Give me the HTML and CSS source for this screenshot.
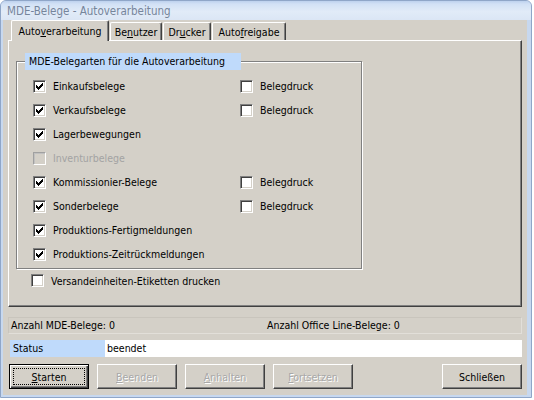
FILE: index.html
```html
<!DOCTYPE html>
<html lang="de">
<head>
<meta charset="utf-8">
<title>MDE-Belege - Autoverarbeitung</title>
<link rel="stylesheet" href="styles.css">
</head>
<body>
<div class="window">
  <div class="titlebar">MDE-Belege - Autoverarbeitung</div>
  <div class="client">
    <div class="tabs">
      <div class="tab active">Auto<u>v</u>erarbeitung</div>
      <div class="tab w-ben">Be<u>n</u>utzer</div>
      <div class="tab w-dru">Dr<u>u</u>cker</div>
      <div class="tab w-auf">Auto<u>f</u>reigabe</div>
    </div>
    <div class="panel">
      <div class="group">
        <div class="group-label">MDE-Belegarten für die Autoverarbeitung</div>
        <div class="grid">
          <div class="row"><span class="cb"><svg width="11" height="11" viewBox="0 0 11 11"><path d="M2 4h1v3H2z M3 5h1v3H3z M4 6h1v3H4z M5 5h1v3H5z M6 4h1v3H6z M7 3h1v3H7z M8 2h1v3H8z"/></svg></span>Einkaufsbelege</div>
          <div class="row"><span class="cb"></span>Belegdruck</div>
          <div class="row"><span class="cb"><svg width="11" height="11" viewBox="0 0 11 11"><path d="M2 4h1v3H2z M3 5h1v3H3z M4 6h1v3H4z M5 5h1v3H5z M6 4h1v3H6z M7 3h1v3H7z M8 2h1v3H8z"/></svg></span>Verkaufsbelege</div>
          <div class="row"><span class="cb"></span>Belegdruck</div>
          <div class="row"><span class="cb"><svg width="11" height="11" viewBox="0 0 11 11"><path d="M2 4h1v3H2z M3 5h1v3H3z M4 6h1v3H4z M5 5h1v3H5z M6 4h1v3H6z M7 3h1v3H7z M8 2h1v3H8z"/></svg></span>Lagerbewegungen</div>
          <div class="row"></div>
          <div class="row disabled"><span class="cb"></span>Inventurbelege</div>
          <div class="row"></div>
          <div class="row"><span class="cb"><svg width="11" height="11" viewBox="0 0 11 11"><path d="M2 4h1v3H2z M3 5h1v3H3z M4 6h1v3H4z M5 5h1v3H5z M6 4h1v3H6z M7 3h1v3H7z M8 2h1v3H8z"/></svg></span>Kommissionier-Belege</div>
          <div class="row"><span class="cb"></span>Belegdruck</div>
          <div class="row"><span class="cb"><svg width="11" height="11" viewBox="0 0 11 11"><path d="M2 4h1v3H2z M3 5h1v3H3z M4 6h1v3H4z M5 5h1v3H5z M6 4h1v3H6z M7 3h1v3H7z M8 2h1v3H8z"/></svg></span>Sonderbelege</div>
          <div class="row"><span class="cb"></span>Belegdruck</div>
          <div class="row"><span class="cb"><svg width="11" height="11" viewBox="0 0 11 11"><path d="M2 4h1v3H2z M3 5h1v3H3z M4 6h1v3H4z M5 5h1v3H5z M6 4h1v3H6z M7 3h1v3H7z M8 2h1v3H8z"/></svg></span>Produktions-Fertigmeldungen</div>
          <div class="row"></div>
          <div class="row"><span class="cb"><svg width="11" height="11" viewBox="0 0 11 11"><path d="M2 4h1v3H2z M3 5h1v3H3z M4 6h1v3H4z M5 5h1v3H5z M6 4h1v3H6z M7 3h1v3H7z M8 2h1v3H8z"/></svg></span>Produktions-Zeitrückmeldungen</div>
          <div class="row"></div>
        </div>
      </div>
      <div class="row single"><span class="cb"></span>Versandeinheiten-Etiketten drucken</div>
    </div>
    <div class="info">
      <span>Anzahl MDE-Belege: 0</span>
      <span>Anzahl Office Line-Belege: 0</span>
    </div>
    <div class="status">
      <div class="status-label">Status</div>
      <div class="status-value">beendet</div>
    </div>
    <div class="buttons">
      <div class="btn default"><span><u>S</u>tarten</span></div>
      <div class="btn disabled"><span><u>B</u>eenden</span></div>
      <div class="btn disabled"><span><u>A</u>nhalten</span></div>
      <div class="btn disabled"><span><u>F</u>ortsetzen</span></div>
      <div class="btn right"><span>Schließen</span></div>
    </div>
  </div>
</div>
</body>
</html>
```
FILE: styles.css
```css
* { box-sizing: border-box; }
html, body { margin: 0; padding: 0; background: #ffffff; }
body {
  font-family: "DejaVu Sans Condensed", "DejaVu Sans", sans-serif;
  font-size: 10.5px;
  color: #000;
}
u { text-decoration: underline; text-underline-offset: 1px; }

.window {
  width: 532px;
  height: 398px;
  border: 1px solid #8fa6c8;
  border-radius: 6px 6px 0 0;
  background: #c7d8ef;
  padding: 0 4px 2px 2px;
  display: flex;
  flex-direction: column;
}
.titlebar {
  height: 19px;
  margin: 0 -4px 0 -2px;
  padding-left: 6px;
  border-radius: 5px 5px 0 0;
  background: linear-gradient(#bdd1ee 0, #d2e1f5 3px, #e1ebf8 55%, #dbe6f5 100%);
  color: #76859b;
  font-size: 11.5px;
  line-height: 20px;
  white-space: nowrap;
}
.client {
  flex: 1;
  background: #d4d0c8;
  padding: 0 5px;
  display: flex;
  flex-direction: column;
}

/* tabs */
.tabs {
  height: 20px;
  display: flex;
  align-items: flex-end;
  gap: 1px;
  padding-left: 3px;
}
.tab {
  height: 18px;
  border-top: 1px solid #fff;
  border-left: 1px solid #fff;
  border-right: 1px solid #404040;
  border-radius: 2px 2px 0 0;
  box-shadow: inset -1px 0 0 #808080;
  padding-top: 3px;
  line-height: 13px;
  text-align: center;
  white-space: nowrap;
}
.tab.active {
  width: 98px;
  height: 21px;
  margin-bottom: -1px;
  padding-top: 4px;
  position: relative;
  z-index: 1;
  background: #d4d0c8;
}
.w-ben { width: 52px; }
.w-dru { width: 48px; }
.w-auf { width: 74px; }

.panel {
  height: 267px;
  border-top: 1px solid #fff;
  border-left: 1px solid #fff;
  border-right: 1px solid #404040;
  border-bottom: 1px solid #404040;
  box-shadow: inset -1px -1px 0 #808080;
  padding: 20px 0 0 7px;
}

/* group box */
.group {
  position: relative;
  width: 346px;
  border: 1px solid #808080;
  box-shadow: 1px 1px 0 #fff, inset 1px 1px 0 #fff;
  padding: 12px 0 2px 16px;
}
.group-label {
  position: absolute;
  left: 8px;
  top: -9px;
  width: 216px;
  height: 17px;
  padding-left: 4px;
  background: #bfdafb;
  line-height: 17px;
  white-space: nowrap;
}
.grid {
  display: grid;
  grid-template-columns: 207px auto;
  grid-auto-rows: 24px;
}
.row {
  display: flex;
  align-items: center;
  white-space: nowrap;
}
.cb {
  width: 13px;
  height: 13px;
  flex: none;
  margin-right: 7px;
  border: 1px solid;
  border-color: #808080 #fff #fff #808080;
  box-shadow: inset 1px 1px 0 #404040, inset -1px -1px 0 #d4d0c8;
  background: #fff;
  display: flex;
}
.cb svg { display: block; fill: #000; }
.row.disabled { color: #a3a3a3; }
.row.disabled .cb {
  background: #d4d0c8;
  border-color: #a0a0a0 #fff #fff #a0a0a0;
  box-shadow: inset 1px 1px 0 #c0c0c0, inset -1px -1px 0 #d4d0c8;
}
.row.single {
  height: 13px;
  margin: 5px 0 0 15px;
}

/* bottom area */
.info {
  margin-top: 10px;
  height: 17px;
  border: 1px solid;
  border-color: #c9c5bd #e2dfd9 #e2dfd9 #c9c5bd;
  padding-left: 2px;
  display: grid;
  grid-template-columns: 256px auto;
  line-height: 15px;
  white-space: nowrap;
}
.status {
  margin: 6px 0 0 2px;
  height: 17px;
  display: flex;
  line-height: 17px;
}
.status-label {
  width: 95px;
  background: #bfdafb;
  padding-left: 3px;
}
.status-value {
  flex: 1;
  background: #fff;
  padding-left: 2px;
}
.buttons {
  margin: 7px 0 0 1px;
  display: flex;
  gap: 8px;
}
.btn {
  width: 80px;
  height: 25px;
  border: 1px solid;
  border-color: #fff #404040 #404040 #fff;
  box-shadow: inset -1px -1px 0 #808080;
  display: flex;
  align-items: center;
  justify-content: center;
  white-space: nowrap;
}
.btn.default {
  border-color: #000;
  box-shadow: inset 1px 1px 0 #fff, inset -1px -1px 0 #404040, inset -2px -2px 0 #808080;
  outline: 1px dotted #000;
  outline-offset: -5px;
}
.btn.disabled {
  color: #a8a8a8;
  text-shadow: 1px 1px 0 #fff;
}
.btn.right { margin-left: auto; }
```
